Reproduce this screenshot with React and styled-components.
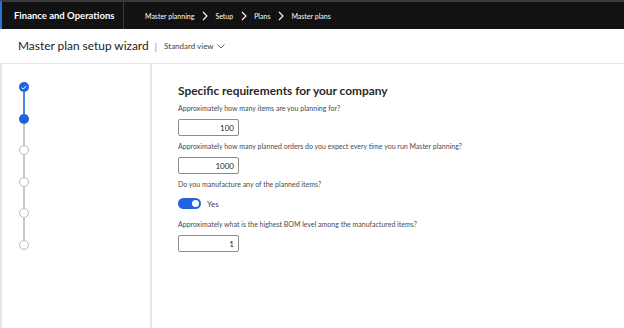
import React from "react";
import styled, { createGlobalStyle } from "styled-components";

const Global = createGlobalStyle`
  html, body { margin: 0; padding: 0; background: #fff; }
  body { font-family: Lato, "Open Sans", sans-serif; width: 624px; height: 328px; overflow: hidden; }
  * { box-sizing: border-box; }
`;

const Page = styled.div`
  width: 624px;
  height: 328px;
  display: flex;
  flex-direction: column;
  background: #fff;
`;

const TopBar = styled.div`
  height: 29px;
  flex: none;
  display: flex;
  align-items: stretch;
  background: #121212;
  border-top: 2px solid #3a3a3a;
  border-left: 2px solid #2a72d6;
  color: #fff;
`;

const AppName = styled.div`
  width: 122px;
  display: flex;
  align-items: center;
  padding-left: 12px;
  font-size: 9.5px;
  font-weight: 700;
  white-space: nowrap;
  border-right: 1px solid #3a3a3a;
`;

const Crumbs = styled.div`
  display: flex;
  align-items: center;
  padding-left: 21px;
  font-size: 7px;
`;

const Crumb = styled.span`
  white-space: nowrap;
`;

const Sep = styled.svg`
  width: 6px;
  height: 10px;
  margin: 0 7px 0 8px;
`;

const Header = styled.div`
  height: 35px;
  flex: none;
  display: flex;
  align-items: center;
  padding-left: 18px;
  border-bottom: 1px solid #e4e4e4;
`;

const Title = styled.h1`
  margin: 0;
  font-size: 11.9px;
  font-weight: 400;
  color: #222;
  white-space: nowrap;
  line-height: 16px;
`;

const Divider = styled.span`
  margin: 0 7px 0 6px;
  color: #888;
  font-size: 10px;
`;

const ViewSelect = styled.span`
  display: flex;
  align-items: center;
  gap: 3px;
  font-size: 8px;
  color: #444;
`;

const Body = styled.div`
  flex: 1;
  display: flex;
  border-left: 2px solid #e6e6e6;
`;

const StepPanel = styled.div`
  width: 150px;
  flex: none;
  border-right: 2px solid #e6e6e6;
  padding: 18px 0 0 17px;
  display: flex;
  flex-direction: column;
  align-items: flex-start;
`;

const StepWrap = styled.div`
  width: 10px;
  display: flex;
  flex-direction: column;
  align-items: center;
`;

const Dot = styled.div`
  width: 10px;
  height: 10px;
  border-radius: 50%;
  flex: none;
  display: flex;
  align-items: center;
  justify-content: center;
  background: ${(p) => (p.$state === "todo" ? "#fff" : "#1f63e0")};
  border: ${(p) => (p.$state === "todo" ? "1.3px solid #bcbcbc" : "none")};
`;

const Line = styled.div`
  width: 1.5px;
  height: 21.5px;
  background: ${(p) => (p.$active ? "#4b84ea" : "#c8c8c8")};
`;

const Content = styled.div`
  padding: 18px 0 0 26px;
  display: flex;
  flex-direction: column;
  align-items: flex-start;
`;

const Heading = styled.h2`
  margin: 0 0 5px 0;
  font-size: 11.9px;
  line-height: 17px;
  font-weight: 700;
  color: #2a2a2a;
  white-space: nowrap;
`;

const Label = styled.div`
  font-size: 7px;
  line-height: 9px;
  color: #4a4a4a;
  margin-bottom: 6px;
  white-space: nowrap;
`;

const NumberBox = styled.div`
  width: 61px;
  height: 17px;
  border: 1px solid #8c8c8c;
  border-radius: 2px;
  display: flex;
  align-items: center;
  justify-content: flex-end;
  padding-right: 4px;
  font-size: 8px;
  color: #222;
  margin-bottom: 6px;
`;

const ToggleRow = styled.div`
  display: flex;
  align-items: center;
  gap: 6px;
  margin: 3px 0 11px 0;
`;

const Toggle = styled.div`
  width: 23px;
  height: 11px;
  border-radius: 6px;
  background: #1f63e0;
  position: relative;
`;

const Knob = styled.div`
  position: absolute;
  right: 2.5px;
  top: 2px;
  width: 7px;
  height: 7px;
  border-radius: 50%;
  background: #fff;
`;

const ToggleText = styled.span`
  font-size: 8px;
  color: #444;
`;

const Chevron = () => (
  <Sep viewBox="0 0 6 10">
    <path d="M1 1 L5 5 L1 9" fill="none" stroke="#fff" strokeWidth="1.1" />
  </Sep>
);

const steps = ["done", "current", "todo", "todo", "todo", "todo"];

export default function App() {
  return (
    <Page>
      <Global />
      <TopBar>
        <AppName>Finance and Operations</AppName>
        <Crumbs>
          <Crumb>Master planning</Crumb>
          <Chevron />
          <Crumb>Setup</Crumb>
          <Chevron />
          <Crumb>Plans</Crumb>
          <Chevron />
          <Crumb>Master plans</Crumb>
        </Crumbs>
      </TopBar>
      <Header>
        <Title>Master plan setup wizard</Title>
        <Divider>|</Divider>
        <ViewSelect>
          Standard view
          <svg width="8" height="5" viewBox="0 0 8 5">
            <path d="M0.5 0.5 L4 4 L7.5 0.5" fill="none" stroke="#555" strokeWidth="0.9" />
          </svg>
        </ViewSelect>
      </Header>
      <Body>
        <StepPanel>
          <StepWrap>
            {steps.map((s, i) => (
              <React.Fragment key={i}>
                <Dot $state={s}>
                  {s === "done" && (
                    <svg width="6" height="5" viewBox="0 0 6 5">
                      <path d="M0.6 2.6 L2.3 4 L5.4 0.8" fill="none" stroke="#fff" strokeWidth="1" />
                    </svg>
                  )}
                </Dot>
                {i < steps.length - 1 && <Line $active={i === 0} />}
              </React.Fragment>
            ))}
          </StepWrap>
        </StepPanel>
        <Content>
          <Heading>Specific requirements for your company</Heading>
          <Label>Approximately how many items are you planning for?</Label>
          <NumberBox>100</NumberBox>
          <Label>Approximately how many planned orders do you expect every time you run Master planning?</Label>
          <NumberBox>1000</NumberBox>
          <Label>Do you manufacture any of the planned items?</Label>
          <ToggleRow>
            <Toggle>
              <Knob />
            </Toggle>
            <ToggleText>Yes</ToggleText>
          </ToggleRow>
          <Label>Approximately what is the highest BOM level among the manufactured items?</Label>
          <NumberBox>1</NumberBox>
        </Content>
      </Body>
    </Page>
  );
}
